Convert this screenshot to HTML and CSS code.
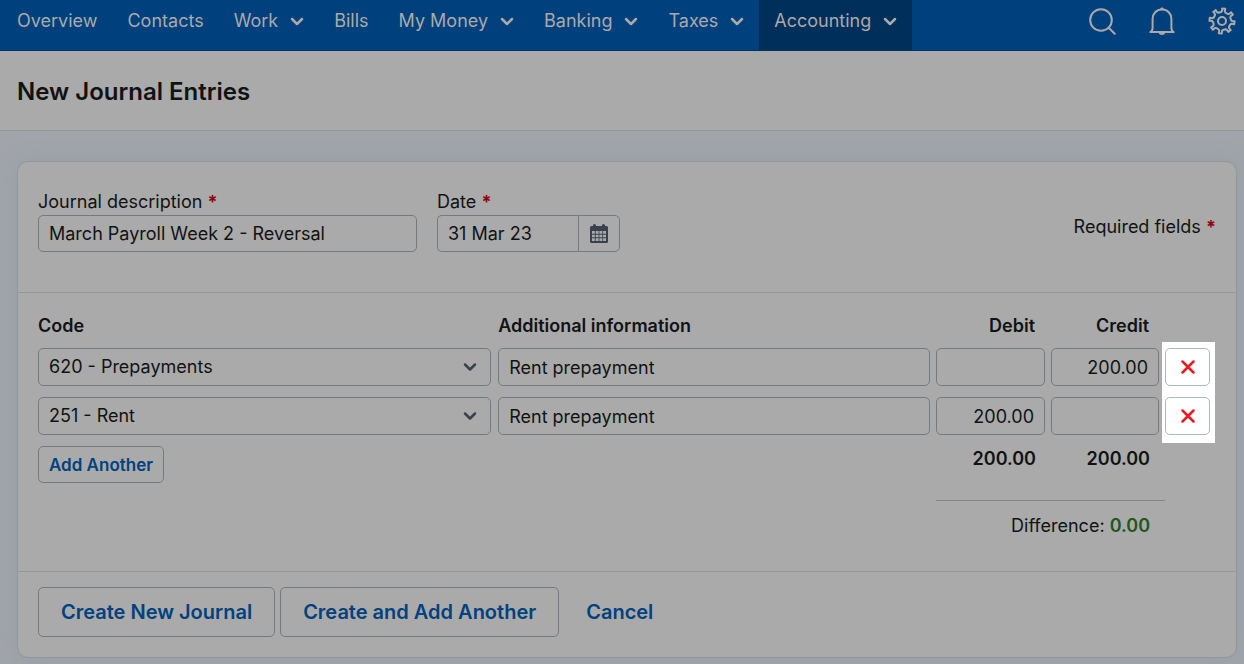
FILE: index.html
```html
<!DOCTYPE html>
<html lang="en">
    <head>
        <meta charset="utf-8" />
        <meta name="viewport" content="width=device-width, initial-scale=1" />
        <title>New Journal Entries</title>
        <link rel="stylesheet" href="styles.css">
    </head>
    <body>
        <nav class="navbar">
            <div class="menu">
                <a href="#">Overview</a>
                <a href="#">Contacts</a>
                <a href="#">Work <svg class="chevron" viewBox="0 0 14 10"><path d="M2 3l5 5 5-5"/></svg></a>
                <a href="#">Bills</a>
                <a href="#">My Money <svg class="chevron" viewBox="0 0 14 10"><path d="M2 3l5 5 5-5"/></svg></a>
                <a href="#">Banking <svg class="chevron" viewBox="0 0 14 10"><path d="M2 3l5 5 5-5"/></svg></a>
                <a href="#">Taxes <svg class="chevron" viewBox="0 0 14 10"><path d="M2 3l5 5 5-5"/></svg></a>
                <a href="#" class="active">Accounting <svg class="chevron" viewBox="0 0 14 10"><path d="M2 3l5 5 5-5"/></svg></a>
            </div>
            <div class="tools">
                <button type="button" aria-label="Search">
                    <svg viewBox="0 0 28 28"><circle cx="13" cy="13" r="10.8"/><path d="M20.7 20.7l6 6"/></svg>
                </button>
                <button type="button" aria-label="Notifications">
                    <svg viewBox="0 0 28 28"><path d="M2.3 25.1c1.7-.8 2.3-2.3 2.3-4.4V12c0-5.5 3.8-9.5 9.4-9.5s9.4 4 9.4 9.5v8.7c0 2.1.6 3.6 2.3 4.400z"/><path class="solid" d="M10.5 25.5h7c-.5 1.7-1.8 2.5-3.5 2.5s-3-.8-3.5-2.5zM12 2.5c.3-1.4 1-2 2-2s1.7.6 2 2z"/></svg>
                </button>
                <button type="button" aria-label="Settings">
                    <svg viewBox="0 0 28 28"><circle cx="14" cy="14" r="4"/><path id="gear"/></svg>
                </button>
            </div>
        </nav>

        <header class="title">
            <h1>New Journal Entries</h1>
        </header>

        <form class="card">
            <div class="details">
                <div class="field description">
                    <label for="description">Journal description <b class="required">*</b></label>
                    <input id="description" type="text" value="March Payroll Week 2 - Reversal"/>
                </div>
                <div class="field">
                    <label for="date">Date <b class="required">*</b></label>
                    <div class="datepicker">
                        <input id="date" type="text" value="31 Mar 23"/>
                        <button type="button" aria-label="Choose date">
                            <svg viewBox="0 0 18 19"><path fill-rule="evenodd" d="M1.5 2H3V1.5a1.5 1.5 0 0 1 3 0V2h6v-.5a1.5 1.5 0 0 1 3 0V2h1.5A1.5 1.5 0 0 1 18 3.5v14a1.5 1.5 0 0 1-1.5 1.5h-15A1.5 1.5 0 0 1 0 17.5v-14A1.5 1.5 0 0 1 1.5 2zM2 7v2.8h2.8V7zm3.7 0v2.8h2.9V7zm3.7 0v2.8h2.9V7zm3.7 0v2.8H16V7zM2 10.7v2.6h2.8v-2.6zm3.7 0v2.6h2.9v-2.6zm3.7 0v2.6h2.9v-2.6zm3.7 0v2.6H16v-2.6zM2 14.2V17h2.8v-2.8zm3.7 0V17h2.9v-2.8zm3.7 0V17h2.9v-2.8zm3.7 0V17H16v-2.8z"/></svg>
                        </button>
                    </div>
                </div>
                <p class="note">Required fields <b class="required">*</b></p>
            </div>

            <div class="entries">
                <table>
                    <colgroup>
                        <col class="col-code"><col><col class="col-debit"><col class="col-credit"><col class="col-remove">
                    </colgroup>
                    <thead>
                        <tr>
                            <th>Code</th>
                            <th>Additional information</th>
                            <th class="amount">Debit</th>
                            <th class="amount">Credit</th>
                            <td></td>
                        </tr>
                    </thead>
                    <tbody>
                        <tr>
                            <td class="code">
                                <div class="select">
                                    <select aria-label="Code"><option>620 - Prepayments</option></select>
                                    <svg class="chevron" viewBox="0 0 14 10"><path d="M2 2.5l5 5 5-5"/></svg>
                                </div>
                            </td>
                            <td><input type="text" aria-label="Additional information" value="Rent prepayment"/></td>
                            <td class="amount"><input type="text" aria-label="Debit"/></td>
                            <td class="amount"><input type="text" aria-label="Credit" value="200.00"/></td>
                            <td class="remove"><button type="button" aria-label="Remove line"><svg viewBox="0 0 14 14"><path d="M1.5 1.5l11 11M12.5 1.5l-11 11"/></svg></button></td>
                        </tr>
                        <tr>
                            <td class="code">
                                <div class="select">
                                    <select aria-label="Code"><option>251 - Rent</option></select>
                                    <svg class="chevron" viewBox="0 0 14 10"><path d="M2 2.5l5 5 5-5"/></svg>
                                </div>
                            </td>
                            <td><input type="text" aria-label="Additional information" value="Rent prepayment"/></td>
                            <td class="amount"><input type="text" aria-label="Debit" value="200.00"/></td>
                            <td class="amount"><input type="text" aria-label="Credit"/></td>
                            <td class="remove"><button type="button" aria-label="Remove line"><svg viewBox="0 0 14 14"><path d="M1.5 1.5l11 11M12.5 1.5l-11 11"/></svg></button></td>
                        </tr>
                    </tbody>
                    <tfoot>
                        <tr class="totals">
                            <td colspan="2"><button type="button" class="btn small">Add Another</button></td>
                            <td class="amount">200.00</td>
                            <td class="amount">200.00</td>
                            <td></td>
                        </tr>
                        <tr>
                            <td colspan="2"></td>
                            <td colspan="3"><div class="difference">Difference: <b>0.00</b></div></td>
                        </tr>
                    </tfoot>
                </table>
            </div>

            <div class="actions">
                <button type="button" class="btn">Create New Journal</button>
                <button type="button" class="btn">Create and Add Another</button>
                <a href="#">Cancel</a>
            </div>
        </form>

        <script type="text/javascript">

            /**
             * Builds the outline of the settings gear, eight teeth around the centre
             */
            function drawGear(){
                let points = [];
                // [degrees from the middle of the tooth, distance from the centre]
                let corners = [[-14, 9], [-8, 10], [-7, 12.6], [7, 12.6], [8, 10], [14, 9]];
                for( let i = 0; i < 8; i++ ){
                    for( let [offset, radius] of corners ){
                        let angle = (i * 45 + 8 + offset) * Math.PI / 180;
                        points.push((14 + radius * Math.sin(angle)).toFixed(2) + ' ' + (14 - radius * Math.cos(angle)).toFixed(2));
                    }
                }
                document.getElementById('gear').setAttribute('d', 'M' + points.join('L') + 'z');
            }

            drawGear();
        </script>
    </body>
</html>
```
FILE: styles.css
```css
* {
    padding: 0;
    margin: 0;
    box-sizing: border-box;
}

:root {
    --paper: #aaaaaa;
    --text: #111313;
    --line: #92979b;
    --border: #737b81;
    --link: #00417f;
    --required: #95000f;
}

body {
    background: #a1a5aa;
    color: var(--text);
    font-family: Inter, "Liberation Sans", sans-serif;
    font-size: 18px;
    line-height: 24px;
}

input, select, button {
    font: inherit;
    color: inherit;
    background: transparent;
    border: 1px solid var(--border);
    border-radius: 5px;
}

a {
    color: var(--link);
    text-decoration: none;
}

svg {
    fill: none;
    stroke: currentColor;
    stroke-width: 2;
    stroke-linecap: round;
    stroke-linejoin: round;
}

.chevron {
    width: 14px;
    height: 10px;
    stroke-width: 2.5;
    flex: none;
}

.navbar {
    display: flex;
    justify-content: space-between;
    background: #00407d;
    border-bottom: 1px solid #003265;
    color: var(--paper);
}
.menu {
    display: flex;
    padding-left: 2px;
}
.menu a {
    display: flex;
    align-items: center;
    gap: 12px;
    padding: 9px 15px 17px;
    color: var(--paper);
    white-space: nowrap;
}
.menu a.active {
    background: #002f5c;
}
.tools {
    display: flex;
    gap: 32px;
    padding: 7px 8px 0 0;
}
.tools button {
    height: 28px;
    border: none;
}
.tools svg {
    display: block;
    width: 28px;
    height: 28px;
}
.tools .solid {
    fill: currentColor;
    stroke: none;
}

.title {
    padding: 25px 17px 22px;
    background: var(--paper);
    border-bottom: 1px solid var(--line);
}
.title h1 {
    font-size: 24px;
    line-height: 32px;
    font-weight: 600;
}

.card {
    margin: 30px 7px 6px 17px;
    background: var(--paper);
    border: 1px solid var(--line);
    border-radius: 11px;
    box-shadow: 0 0 20px rgba(130, 138, 160, 0.3);
}

.details {
    display: flex;
    gap: 20px;
    padding: 28px 20px 40px;
    border-bottom: 1px solid var(--line);
}
.field label {
    display: block;
    height: 25px;
}
.field input {
    height: 37px;
    padding: 0 10px;
}
.description {
    width: 379px;
}
.description input {
    width: 100%;
}
.datepicker {
    display: flex;
}
.datepicker input {
    width: 141px;
    border-right: none;
    border-radius: 5px 0 0 5px;
}
.datepicker button {
    display: flex;
    align-items: center;
    justify-content: center;
    width: 42px;
    border-radius: 0 5px 5px 0;
}
.datepicker svg {
    width: 18px;
    height: 19px;
    fill: #38414e;
    stroke: none;
}
.required {
    color: var(--required);
}
.note {
    margin-left: auto;
    padding-top: 25px;
}

.entries {
    padding: 0 21px 31px 17px;
    border-bottom: 1px solid var(--line);
}
table {
    width: 100%;
    table-layout: fixed;
    border-collapse: collapse;
}
.col-code {
    width: 39%;
}
.col-debit {
    width: 115px;
}
.col-credit {
    width: 114px;
}
.col-remove {
    width: 53px;
}
th {
    padding: 21px 3px 4px;
    font-weight: 600;
    text-align: left;
}
th.amount {
    padding-right: 13px;
}
.amount, .amount input {
    text-align: right;
}

tbody td {
    padding: 6px 3px 5px;
}
tbody tr:last-child td {
    padding-bottom: 8px;
}
tbody input, tbody select, tbody button {
    display: block;
    width: 100%;
    height: 38px;
    padding: 0 10px;
}
tbody td.code {
    padding-right: 4px;
}
.select {
    position: relative;
}
.select select {
    appearance: none;
}
.select .chevron {
    position: absolute;
    right: 14px;
    top: 14px;
    color: #38424c;
    pointer-events: none;
}

/* the remove buttons stand out from the dimmed page */
tbody td.remove {
    padding-right: 5px;
    background: #fff;
}
.remove button {
    border-color: #acb8c0;
    color: #e31b23;
}
.remove svg {
    display: block;
    width: 14px;
    height: 14px;
    margin: auto;
    stroke-width: 2.5;
}

.totals td {
    height: 57px;
    padding: 3px;
    font-weight: 600;
    vertical-align: top;
}
.totals td.amount {
    padding: 4px 12px 0 0;
}
.difference {
    margin: 0 50px 0 3px;
    padding: 13px 15px 2px 0;
    border-top: 1px solid #828689;
    text-align: right;
}
.difference b {
    color: #22561b;
    font-weight: 600;
}

.btn {
    height: 50px;
    padding: 0 22px;
    color: var(--link);
    font-size: 20px;
    font-weight: 600;
}
.btn.small {
    display: block;
    height: 37px;
    padding: 0 10px;
    font-size: 17px;
}
.actions {
    display: flex;
    align-items: center;
    gap: 5px;
    padding: 15px 20px 20px;
}
.actions a {
    padding: 0 22px;
    font-size: 20px;
    font-weight: 600;
}
```
